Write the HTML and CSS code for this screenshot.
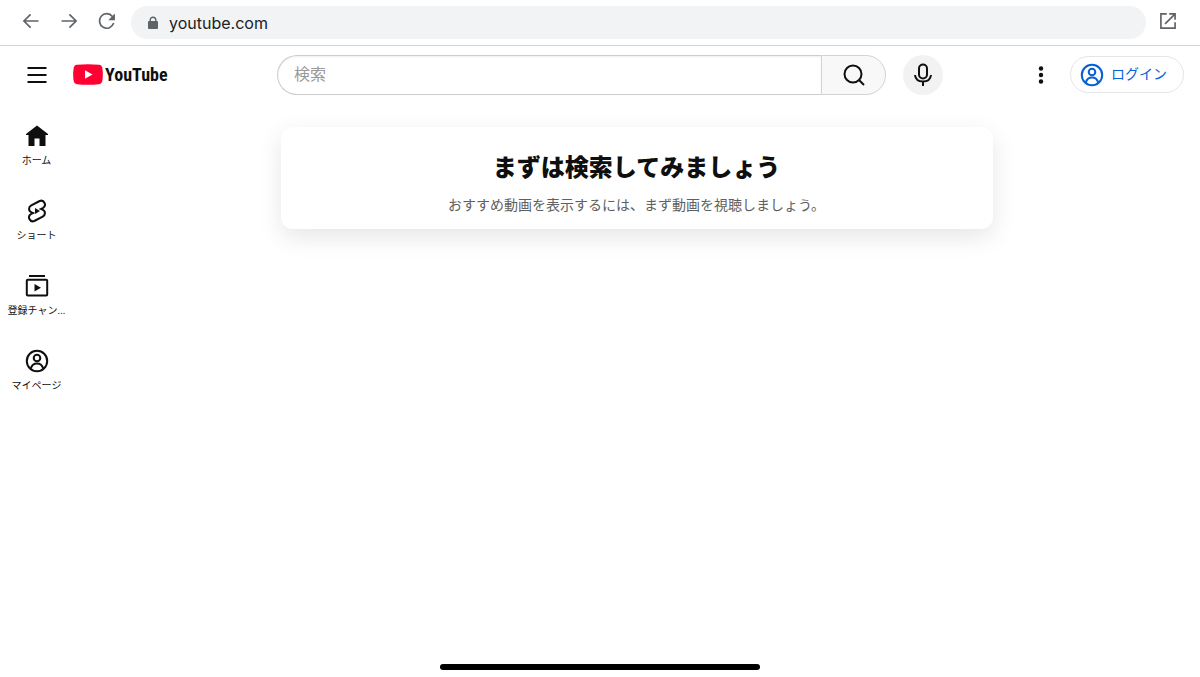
FILE: index.html
```
<!DOCTYPE html>
<html lang="ja">
<head>
    <meta charset="UTF-8">
    <meta name="viewport" content="width=device-width, initial-scale=1.0">
    <title>YouTube</title>
    <link rel="stylesheet" href="styles.css">
</head>
<body>

<div class="browser-bar">
    <button type="button" class="nav-button" aria-label="戻る">
        <svg class="nav-icon" viewBox="0 0 24 24"><path d="M21 12H4M11.500 4L3.500 12l8 8"/></svg>
    </button>
    <button type="button" class="nav-button" aria-label="進む">
        <svg class="nav-icon" viewBox="0 0 24 24"><path d="M3 12h17M12.500 4l8 8-8 8"/></svg>
    </button>
    <button type="button" class="nav-button" aria-label="再読み込み">
        <svg class="nav-icon" viewBox="0 0 24 24"><path d="M20 14.500A8.700 8.700 0 1 1 18.500 6.500"/><path class="solid" d="M21.500 3v8h-8z"/></svg>
    </button>
    <div class="address">
        <svg class="lock" viewBox="0 0 12 14"><path d="M3.200 6V4a2.800 2.800 0 0 1 5.600 0v2" fill="none" stroke="currentColor" stroke-width="1.400"/><rect x="1" y="5" width="10" height="8" rx="1" fill="currentColor"/></svg>
        <input type="text" class="url" value="youtube.com" aria-label="アドレス">
    </div>
    <button type="button" class="nav-button" aria-label="新しいタブで開く">
        <svg class="nav-icon" viewBox="0 0 24 24"><path d="M10.500 3.500H3.500v17h17v-7M13.500 3.500h7v7M20 4L8.500 15.500"/></svg>
    </button>
</div>

<header class="header">
    <div class="header-start">
        <button type="button" class="menu-button" aria-label="ガイド">
            <svg class="icon" viewBox="0 0 24 24"><path d="M2.500 5h19M2.500 12h19M2.500 19h19"/></svg>
        </button>
        <a href="#" class="logo">
            <svg class="logo-mark" viewBox="0 0 30 21"><path fill="#ff0033" d="M4 .8Q15-.4 26 .8 29 1.100 29.400 4.500 30.300 10.500 29.400 16.500 29 19.900 26 20.200 15 21.400 4 20.200 1 19.900.6 16.500-.3 10.500.6 4.500 1 1.100 4 .8z"/><path fill="#fff" d="M12 6.300l7.500 4.200-7.500 4.200z"/></svg>
            <span class="logo-text">YouTube</span>
        </a>
    </div>

    <div class="header-center">
        <form class="search">
            <input type="text" class="search-input" placeholder="検索" aria-label="検索">
            <button type="submit" class="search-button" aria-label="検索">
                <svg class="icon" viewBox="0 0 24 24"><circle cx="11" cy="11" r="8.500"/><path d="M17 17l5 5"/></svg>
            </button>
        </form>
        <button type="button" class="mic-button" aria-label="音声で検索">
            <svg class="icon" viewBox="0 0 24 24"><rect x="8" y="1.500" width="8" height="14" rx="4"/><path d="M4 12c.5 4.500 4 6.500 8 6.500s7.500-2 8-6.500M12 18.500v4.500"/></svg>
        </button>
    </div>

    <div class="header-end">
        <button type="button" class="more-button" aria-label="設定">
            <svg class="icon" viewBox="0 0 24 24"><g class="solid"><circle cx="12" cy="5.500" r="2.200"/><circle cx="12" cy="12" r="2.200"/><circle cx="12" cy="18.500" r="2.200"/></g></svg>
        </button>
        <a href="#" class="login">
            <svg class="icon" viewBox="0 0 24 24"><circle cx="12" cy="12" r="10.200"/><circle cx="12" cy="9" r="3.300"/><path d="M5.800 19.500c1-3.700 3.400-5 6.200-5s5.200 1.300 6.200 5"/></svg>
            <span>ログイン</span>
        </a>
    </div>
</header>

<div class="page">
    <nav class="sidebar">
        <a href="#" class="sidebar-item">
            <svg class="icon" viewBox="0 0 24 24"><path class="solid" d="M12 1.500L1 10v1h2.500v11h6v-7.500h5V22h6V11H23v-1z"/></svg>
            <span>ホーム</span>
        </a>
        <a href="#" class="sidebar-item">
            <svg class="icon" viewBox="0 0 24 24"><path d="M14.700 2L6.300 6.400C3.200 8 3.400 12.200 6.500 13.400L8 14l-1.800.9C1.800 17.300 4.900 23.700 9.300 22l8.400-4.400c3.100-1.600 2.900-5.800-.2-7L16 10l1.800-.9C22.200 6.700 19.100.3 14.700 2z"/><path class="solid" d="M10 9v6l5-3z"/></svg>
            <span>ショート</span>
        </a>
        <a href="#" class="sidebar-item">
            <svg class="icon" viewBox="0 0 24 24"><path d="M4 2h16"/><rect x="1.800" y="5.800" width="20.400" height="15.800" rx="1"/><path class="solid" d="M9.500 10v7.400l6.500-3.700z"/></svg>
            <span>登録チャン...</span>
        </a>
        <a href="#" class="sidebar-item">
            <svg class="icon" viewBox="0 0 24 24"><circle cx="12" cy="12" r="10.200"/><circle cx="12" cy="9" r="3.300"/><path d="M5.800 19.500c1-3.700 3.400-5 6.200-5s5.200 1.300 6.200 5"/></svg>
            <span>マイページ</span>
        </a>
    </nav>

    <main class="content">
        <section class="card">
            <h1>まずは検索してみましょう</h1>
            <p>おすすめ動画を表示するには、まず動画を視聴しましょう。</p>
        </section>
    </main>
</div>

<div class="home-bar"></div>

</body>
</html>
```
FILE: styles.css
```
* {
    box-sizing: border-box;
}

body {
    display: flex;
    flex-direction: column;
    min-height: 100vh;
    margin: 0;
    font-family: Roboto, "Noto Sans CJK JP", sans-serif;
    background-color: #fff;
    color: #0f0f0f;
}

button {
    display: flex;
    align-items: center;
    justify-content: center;
    padding: 0;
    border: none;
    background: none;
    color: inherit;
    cursor: pointer;
}

a {
    color: inherit;
    text-decoration: none;
}

.icon,
.nav-icon {
    flex-shrink: 0;
    fill: none;
    stroke: currentColor;
    stroke-width: 2;
}

.icon {
    width: 24px;
    height: 24px;
}

.nav-icon {
    width: 20px;
    height: 20px;
}

.solid {
    fill: currentColor;
    stroke: none;
}

/* Browser bar */
.browser-bar {
    display: flex;
    align-items: flex-start;
    gap: 14px;
    height: 46px;
    padding: 6px 20px 0 19px;
    border-bottom: 1px solid #d4d5d8;
}

.nav-button {
    width: 24px;
    height: 30px;
    color: #5f6368;
}

.address {
    display: flex;
    flex: 1;
    align-items: center;
    gap: 10px;
    height: 33px;
    margin: 0 -4px 0 -2px;
    padding: 0 16px;
    border-radius: 17px;
    background-color: #f1f3f4;
}

.lock {
    width: 12px;
    height: 14px;
    color: #5f6368;
}

.url {
    flex: 1;
    padding: 0;
    border: none;
    outline: none;
    background: none;
    font-family: Inter, sans-serif;
    font-size: 16px;
    color: #202124;
}

/* Header */
.header {
    display: grid;
    grid-template-columns: 1fr minmax(0, 666px) 1fr;
    align-items: center;
    height: 57px;
    padding: 0 16px 0 36px;
}

.header-start,
.header-center,
.header-end {
    display: flex;
    align-items: center;
}

.header-start {
    gap: 16px;
    margin-left: -19px;
}

.menu-button,
.more-button {
    width: 40px;
    height: 40px;
}

.logo {
    display: flex;
    align-items: center;
    gap: 2px;
}

.logo-mark {
    width: 30px;
    height: 21px;
}

.logo-text {
    font-family: "Roboto Condensed", "Liberation Sans Narrow", "Liberation Sans", sans-serif;
    font-size: 18px;
    font-weight: bold;
}

.header-center {
    gap: 17px;
}

.search {
    display: flex;
    flex: 1;
    height: 40px;
}

.search-input {
    flex: 1;
    min-width: 0;
    padding: 0 16px;
    border: 1px solid #ccc;
    border-right: none;
    border-radius: 20px 0 0 20px;
    outline: none;
    box-shadow: inset 0 1px 2px #eee;
    font-family: inherit;
    font-size: 16px;
}

.search-input::placeholder {
    color: #999;
}

.search-button {
    width: 65px;
    border: 1px solid #d3d3d3;
    border-radius: 0 20px 20px 0;
    background-color: #f8f8f8;
}

.mic-button {
    width: 40px;
    height: 40px;
    border-radius: 50%;
    background-color: #f2f2f2;
}

.header-end {
    justify-content: flex-end;
    gap: 9px;
}

.login {
    display: flex;
    align-items: center;
    gap: 7px;
    height: 37px;
    padding: 0 16px 0 9px;
    border: 1px solid #e5e5e5;
    border-radius: 19px;
    color: #065fd4;
    font-size: 14px;
}

.login span {
    padding-bottom: 4px;
}

/* Page */
.page {
    display: flex;
    flex: 1;
}

.sidebar {
    width: 73px;
    padding: 5px 4px;
}

.sidebar-item {
    display: flex;
    flex-direction: column;
    align-items: center;
    gap: 6px;
    height: 75px;
    padding-top: 16px;
    font-size: 10px;
    line-height: 14px;
    white-space: nowrap;
}

.content {
    flex: 1;
    padding: 24px;
}

.card {
    max-width: 712px;
    margin: 0 auto;
    padding: 23px 24px 14px;
    border-radius: 12px;
    box-shadow: 0 8px 24px rgba(0, 0, 0, 0.1);
    text-align: center;
}

.card h1 {
    margin: 0 0 9px;
    font-size: 24px;
    font-weight: 900;
    line-height: 36px;
}

.card p {
    margin: 0;
    color: #606060;
    font-size: 14px;
    line-height: 20px;
}

.home-bar {
    width: 320px;
    height: 6px;
    margin: 0 auto 7px;
    border-radius: 3px;
    background-color: #000;
}
```
